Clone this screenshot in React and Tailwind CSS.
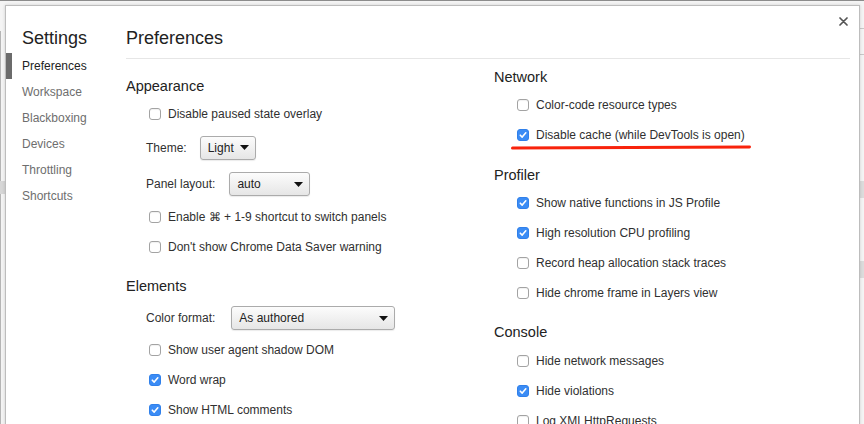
import React from 'react';

const sidebarItems = ['Preferences', 'Workspace', 'Blackboxing', 'Devices', 'Throttling', 'Shortcuts'];

function Checkbox({ checked }) {
  if (checked) {
    return (
      <span className="w-[12px] h-[12px] rounded-[3px] bg-[#3b8cf5] border border-[#3080ea] flex items-center justify-center shrink-0">
        <svg width="10" height="10" viewBox="0 0 10 10">
          <path d="M2.3 5.2 L4.2 7.1 L7.8 2.8" fill="none" stroke="white" strokeWidth="1.6" strokeLinecap="round" strokeLinejoin="round" />
        </svg>
      </span>
    );
  }
  return <span className="w-[12px] h-[12px] rounded-[3px] bg-white border border-[#a3a3a3] shadow-[inset_0_1px_1px_rgba(0,0,0,0.06)] shrink-0" />;
}

function CheckRow({ label, checked, children }) {
  return (
    <div className="relative h-[30px] flex items-center pl-[23px]">
      <Checkbox checked={checked} />
      <span className="ml-[7px] text-[12px] text-[#303030]">{label}</span>
      {children}
    </div>
  );
}

function Heading({ children, className = '' }) {
  return <div className={`h-[20px] leading-[20px] text-[14.5px] text-[#222] ${className}`}>{children}</div>;
}

function Select({ value, width, gap }) {
  return (
    <div
      className={`h-[24px] flex items-center justify-between pl-[7px] pr-[6px] rounded-[3px] border border-[#ababab] bg-gradient-to-b from-[#fcfcfc] to-[#e6e6e6] shadow-[0_1px_1px_rgba(0,0,0,0.08)] text-[12px] text-[#222] ${width} ${gap}`}
    >
      <span>{value}</span>
      <svg width="9" height="5" viewBox="0 0 9 5">
        <path d="M0 0 L9 0 L4.5 5 Z" fill="#111" />
      </svg>
    </div>
  );
}

function SelectRow({ label, value, width, gap, height }) {
  return (
    <div className={`flex items-center pl-[20px] ${height}`}>
      <span className="text-[12px] text-[#303030]">{label}</span>
      <Select value={value} width={width} gap={gap} />
    </div>
  );
}

export default function App() {
  return (
    <div className="relative w-[864px] h-[424px] overflow-hidden bg-[#f4f4f4] border-t border-[#8c8c8c] font-['Liberation_Sans',Arial,sans-serif]">
      {/* background app fragments */}
      <div className="absolute left-0 top-[30px] w-[1px] h-[394px] bg-[#b5b5b5]" />
      <div className="absolute left-0 top-[180px] w-[5px] h-[13px] bg-[#d6d6d6]" />
      <div className="absolute right-0 top-[27px] w-[5px] h-[1px] bg-[#c8c8c8]" />
      <div className="absolute right-0 top-[53px] w-[5px] h-[1px] bg-[#c8c8c8]" />
      <div className="absolute right-0 top-[180px] w-[5px] h-[17px] bg-[#dcdcdc]" />
      <div className="absolute right-0 top-[260px] w-[5px] h-[17px] bg-[#dcdcdc]" />

      {/* settings dialog */}
      <div className="absolute left-[5px] top-[4px] w-[855px] h-[440px] bg-white border border-[#bdbdbd] shadow-[0_0_3px_rgba(0,0,0,0.15)] flex">
        <button className="absolute right-[10px] top-[9px] w-[12px] h-[12px] flex items-center justify-center">
          <svg width="9" height="9" viewBox="0 0 9 9">
            <path d="M1 1 L8 8 M8 1 L1 8" stroke="#555" strokeWidth="1.7" strokeLinecap="round" />
          </svg>
        </button>

        {/* sidebar */}
        <div className="w-[120px] shrink-0">
          <div className="pt-[23px] pl-[16px] h-[47px] leading-[18px] text-[18px] text-[#222]">Settings</div>
          <div>
            {sidebarItems.map((item, i) => (
              <div key={item} className="relative h-[26px] flex items-center pl-[16px]">
                {i === 0 && <div className="absolute left-0 top-0 w-[6px] h-[26px] bg-[#6b6b6b]" />}
                <span className={`text-[12px] ${i === 0 ? 'text-[#222]' : 'text-[#6e6e6e]'}`}>{item}</span>
              </div>
            ))}
          </div>
        </div>

        {/* main */}
        <div className="flex-1 pr-[9px]">
          <div className="pt-[23px] pb-[11px] border-b border-[#e6e6e6] leading-[18px] text-[18px] text-[#222]">Preferences</div>
          <div className="flex">
            <div className="w-[368px] shrink-0 pt-[17px]">
              <Heading>Appearance</Heading>
              <div className="mt-[3px]">
                <CheckRow label="Disable paused state overlay" />
                <SelectRow label="Theme:" value="Light" width="w-[56px]" gap="ml-[13px]" height="h-[37px]" />
                <SelectRow label="Panel layout:" value="auto" width="w-[81px]" gap="ml-[14px]" height="h-[36px]" />
                <CheckRow label="Enable ⌘ + 1-9 shortcut to switch panels" />
                <CheckRow label="Don't show Chrome Data Saver warning" />
              </div>
              <Heading className="mt-[14px]">Elements</Heading>
              <div className="mt-[5px]">
                <SelectRow label="Color format:" value="As authored" width="w-[164px]" gap="ml-[16px]" height="h-[34px]" />
                <CheckRow label="Show user agent shadow DOM" />
                <CheckRow label="Word wrap" checked />
                <CheckRow label="Show HTML comments" checked />
              </div>
            </div>

            <div className="flex-1 pt-[8px]">
              <Heading>Network</Heading>
              <div className="mt-[3px]">
                <CheckRow label="Color-code resource types" />
                <CheckRow label="Disable cache (while DevTools is open)" checked>
                  <div className="absolute left-[17px] top-[26px] w-[240px] h-[3px] rounded-full bg-[#f8230c] -rotate-[0.3deg]" />
                </CheckRow>
              </div>
              <Heading className="mt-[15px]">Profiler</Heading>
              <div className="mt-[3px]">
                <CheckRow label="Show native functions in JS Profile" checked />
                <CheckRow label="High resolution CPU profiling" checked />
                <CheckRow label="Record heap allocation stack traces" />
                <CheckRow label="Hide chrome frame in Layers view" />
              </div>
              <Heading className="mt-[14px]">Console</Heading>
              <div className="mt-[4px]">
                <CheckRow label="Hide network messages" />
                <CheckRow label="Hide violations" checked />
                <CheckRow label="Log XMLHttpRequests" />
              </div>
            </div>
          </div>
        </div>
      </div>
    </div>
  );
}
